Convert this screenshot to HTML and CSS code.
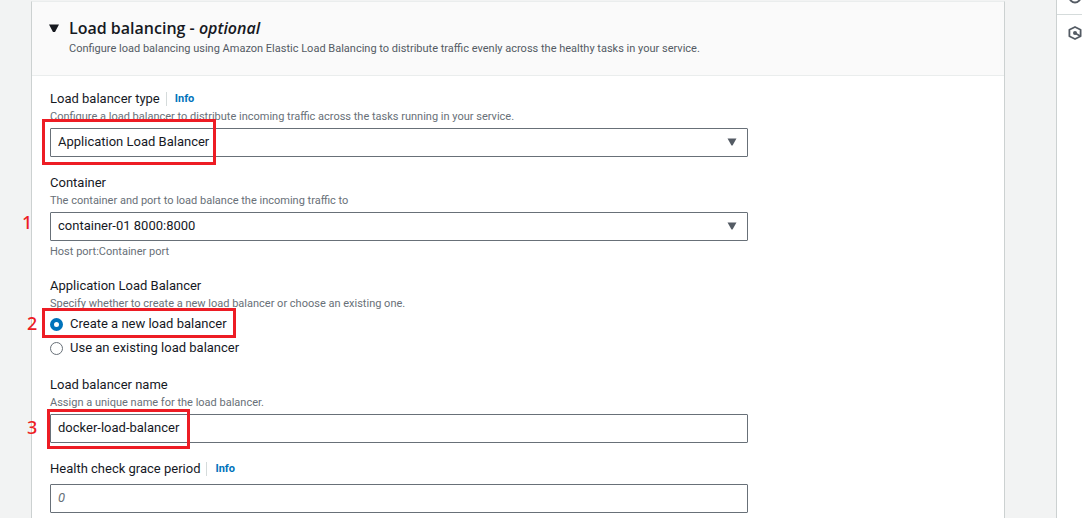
FILE: index.html
```
<!DOCTYPE html>
<html lang="en">
<head>
<meta charset="utf-8">
<title>Create service - Load balancing</title>
<link rel="stylesheet" href="styles.css">
</head>
<body>
<div class="layout">
  <main class="main">
    <section class="card">
      <header class="card-header">
        <button class="toggle" type="button" aria-label="Collapse load balancing" aria-expanded="true">
          <svg width="10" height="9" viewBox="0 0 10 9"><path d="M0 0.5h10L6 8H4z" fill="currentColor"/></svg>
        </button>
        <div class="heading">
          <h2 class="title">Load balancing - <em>optional</em></h2>
          <p class="subtitle">Configure load balancing using Amazon Elastic Load Balancing to distribute traffic evenly across the healthy tasks in your service.</p>
        </div>
      </header>
      <form class="form">
        <div class="field">
          <div class="label-row"><label for="lb-type">Load balancer type</label><a class="info" href="#type-info">Info</a></div>
          <p class="description">Configure a load balancer to distribute incoming traffic across the tasks running in your service.</p>
          <div class="control">
            <select class="input" id="lb-type"><option>Application Load Balancer</option></select>
            <svg class="caret" width="10" height="8" viewBox="0 0 10 8"><path d="M0.500 0.500h9L5.500 7.500h-1z" fill="currentColor"/></svg>
            <span class="mark mark-type"></span>
          </div>
        </div>
        <div class="field">
          <div class="label-row"><label for="container">Container</label></div>
          <p class="description">The container and port to load balance the incoming traffic to</p>
          <div class="control">
            <select class="input" id="container"><option>container-01 8000:8000</option></select>
            <svg class="caret" width="10" height="8" viewBox="0 0 10 8"><path d="M0.500 0.500h9L5.500 7.500h-1z" fill="currentColor"/></svg>
            <span class="step step-one">1</span>
          </div>
          <p class="hint">Host port:Container port</p>
        </div>
        <div class="field" role="radiogroup" aria-labelledby="alb-label">
          <div class="label-row"><span id="alb-label">Application Load Balancer</span></div>
          <p class="description">Specify whether to create a new load balancer or choose an existing one.</p>
          <div class="control options">
            <label class="option"><input class="radio" type="radio" name="alb" checked>Create a new load balancer</label>
            <label class="option"><input class="radio" type="radio" name="alb">Use an existing load balancer</label>
            <span class="mark mark-create"></span>
            <span class="step step-two">2</span>
          </div>
        </div>
        <div class="field">
          <div class="label-row"><label for="lb-name">Load balancer name</label></div>
          <p class="description">Assign a unique name for the load balancer.</p>
          <div class="control">
            <input class="input" id="lb-name" type="text" value="docker-load-balancer">
            <span class="mark mark-name"></span>
            <span class="step step-three">3</span>
          </div>
        </div>
        <div class="field">
          <div class="label-row"><label for="grace">Health check grace period</label><a class="info" href="#grace-info">Info</a></div>
          <div class="control control-spaced">
            <input class="input" id="grace" type="text" placeholder="0">
          </div>
        </div>
      </form>
    </section>
  </main>
  <aside class="rail">
    <button class="rail-button rail-first" type="button" aria-label="Help panel">
      <svg width="14" height="14" viewBox="0 0 14 14" fill="none" stroke="currentColor" stroke-width="2"><circle cx="7" cy="7" r="5.500"/><path d="M7 6v4M7 4v1"/></svg>
    </button>
    <button class="rail-button" type="button" aria-label="Shortcuts">
      <svg width="14" height="14" viewBox="0 0 14 14" fill="none" stroke="currentColor" stroke-width="1.800"><path d="M7 1L12.600 3.700V10.300L7 13L1.400 10.300V3.700Z" stroke-linejoin="round"/><circle cx="7" cy="7" r="2" fill="currentColor" stroke="none"/><path d="M7 7l5 3"/></svg>
    </button>
  </aside>
</div>
</body>
</html>
```
FILE: styles.css
```
* { box-sizing: border-box; }
body {
  margin: 0;
  background: #f2f3f3;
  color: #16191f;
  font: 13px/18px Roboto, "Noto Sans", sans-serif;
}
h2, p { margin: 0; }
button { padding: 0; border: 0; background: none; color: inherit; }
svg { display: block; }
.layout { display: flex; min-height: 100vh; }
.main { flex: 1; display: flex; padding: 1px 51px 0 31px; }
.card {
  flex: 1;
  background: #fff;
  border: 1px solid #ccd1d1;
  border-top-color: #eaeded;
  border-bottom: 0;
}
.card-header {
  display: flex;
  gap: 10px;
  padding: 16px 17px;
  background: #fafafa;
  border-bottom: 1px solid #eaeded;
}
.toggle { height: 20px; }
.title { font: 600 16px/20px "Open Sans", "Noto Sans", sans-serif; }
.subtitle { font-size: 11px; line-height: 21px; color: #545b64; }
.form {
  display: flex;
  flex-direction: column;
  gap: 17px;
  max-width: 734px;
  padding: 14px 18px 4px;
}
.label-row { display: flex; align-items: center; }
.info {
  margin-left: 6px;
  padding-left: 8px;
  border-left: 1px solid #d5dbdb;
  color: #0073bb;
  font-size: 11px;
  line-height: 14px;
  font-weight: 700;
  text-decoration: none;
}
.description, .hint { font-size: 11px; line-height: 16px; color: #687078; }
.description { padding-top: 1px; }
.hint { margin-top: 3px; }
.control { position: relative; margin-top: 3px; }
.control-spaced { margin-top: 6px; }
.input {
  display: block;
  width: 100%;
  height: 29px;
  padding: 0 7px 2px;
  border: 1px solid #687078;
  border-radius: 1px;
  background: #fff;
  color: #16191f;
  font: inherit;
  appearance: none;
}
.input::placeholder { color: #687078; font-style: italic; opacity: 1; }
.caret { position: absolute; right: 11px; top: 10px; color: #545b64; pointer-events: none; }
.options { display: flex; flex-direction: column; gap: 6px; padding-bottom: 2px; }
.option { display: flex; align-items: center; gap: 7px; }
.radio {
  width: 13px;
  height: 13px;
  margin: 1px 0 0;
  border: 1px solid #687078;
  border-radius: 50%;
  background: #fff;
  appearance: none;
}
.radio:checked { border: 4px solid #0073bb; }

/* Walkthrough callouts drawn over the form */
.mark { position: absolute; border: 3px solid #ed1c24; pointer-events: none; }
.mark-type { left: -8px; top: -9px; width: 174px; height: 46px; }
.mark-create { left: -8px; top: -7px; width: 194px; height: 30px; }
.mark-name { left: -3px; top: -5px; width: 143px; height: 40px; }
.step { position: absolute; color: #ed1c24; font: 500 18px/20px "Noto Sans", sans-serif; }
.step-one { left: -28px; top: 0; }
.step-two { left: -23px; top: -2px; }
.step-three { left: -23px; top: 3px; }

.rail {
  width: 26px;
  overflow: hidden;
  background: #fff;
  border-left: 1px solid #ccd1d1;
  color: #545b64;
}
.rail-button { display: flex; align-items: center; width: 100%; height: 36px; padding-left: 11px; }
.rail-button svg { flex: none; }
.rail-first { height: 15px; align-items: flex-end; padding-bottom: 10px; border-bottom: 1px solid #d5dbdb; }
```
